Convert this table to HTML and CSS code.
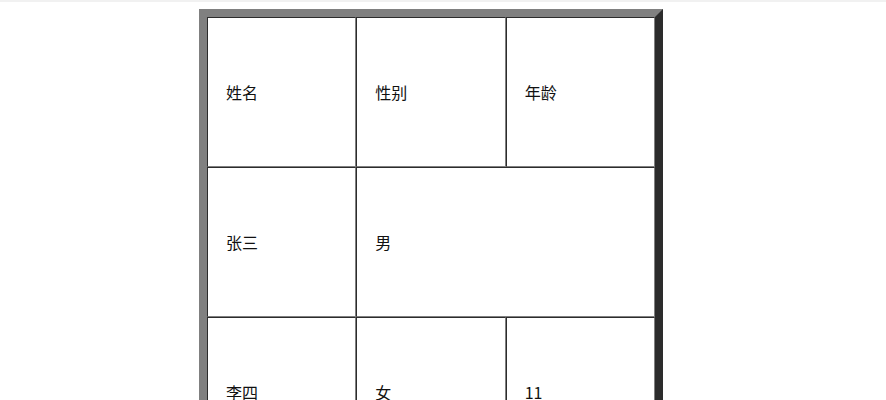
FILE: index.html
```html
<!DOCTYPE html>
<html lang="zh">
<head>
<meta charset="utf-8">
<link rel="stylesheet" href="styles.css">
</head>
<body>
<div class="topbar"></div>
<table class="grid">
  <tr><td>姓名</td><td>性别</td><td>年龄</td></tr>
  <tr><td>张三</td><td colspan="2">男</td></tr>
  <tr><td>李四</td><td>女</td><td>11</td></tr>
</table>
</body>
</html>
```
FILE: styles.css
```css
html, body {
  margin: 0;
  padding: 0;
  background: #fff;
}
body {
  font-family: "Noto Sans CJK SC", "Noto Sans", sans-serif;
  font-size: 16px;
  color: #111;
}
.topbar {
  height: 2px;
  background: #f1f1f1;
}
.grid {
  margin: 7px 0 0 199px;
  width: 464px;
  table-layout: fixed;
  border-collapse: separate;
  border-spacing: 0;
  border: 8px outset gray;
}
.grid td {
  height: 150px;
  box-sizing: border-box;
  border: 1px inset gray;
  padding: 0 0 0 18px;
  vertical-align: middle;
}
```
